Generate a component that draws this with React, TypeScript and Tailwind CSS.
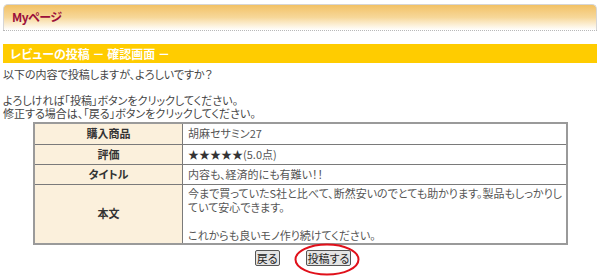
import React from 'react';

interface RowProps {
  label: string;
  children: React.ReactNode;
  height: string;
}

const Row: React.FC<RowProps> = ({ label, children, height }) => (
  <tr className={height}>
    <th className="w-[166px] border border-[#7a7a7a] bg-[#fbf0dc] p-0 text-center align-middle font-bold text-[11px] leading-[13px] text-[#333]">
      {label}
    </th>
    <td className="border border-[#7a7a7a] p-0 pl-[5px] pr-[4px] align-middle whitespace-nowrap text-[#555]">{children}</td>
  </tr>
);

const App: React.FC = () => {
  return (
    <div className="w-[600px] h-[279px] overflow-hidden bg-white px-[3px] pt-[4px] font-['Noto_Sans_CJK_JP',sans-serif] text-[11px] leading-[13px] text-[#444] [font-feature-settings:'palt']">
      {/* Myページ header */}
      <div className="h-[26px] rounded-t-[5px] border border-b-0 border-[#d6d6d6] bg-linear-to-b from-[#f2c164] via-[#f7d89a] to-white pl-[8px] pt-[5px]">
        <span className="font-bold text-[12px] leading-[14px] text-[#9c0f3a] tracking-[-0.5px]">Myページ</span>
      </div>
      <div className="border-b border-dotted border-[#b8b8b8]" />

      {/* section title */}
      <div className="mt-[13px] flex h-[19px] items-center bg-[#ffcc00] pl-[7px] font-bold text-white text-[12px] leading-[14px]">
        レビューの投稿 － 確認画面 －
      </div>

      <div className="mt-[5px]">
        <p className="h-[13px]">以下の内容で投稿しますが、よろしいですか？</p>
        <p className="mt-[13px] h-[13px]">よろしければ「投稿」ボタンをクリックしてください。</p>
        <p className="h-[13px]">修正する場合は、「戻る」ボタンをクリックしてください。</p>
      </div>

      <table className="ml-[30px] mt-[2px] w-[535px] border-collapse border-2 border-[#9a9a9a]">
        <tbody>
          <Row label="購入商品" height="h-[21px]">胡麻セサミン27</Row>
          <Row label="評価" height="h-[20px]">
            <span className="text-[#333]">★★★★★</span>(5.0点)
          </Row>
          <Row label="タイトル" height="h-[20px]">内容も、経済的にも有難い！！</Row>
          <Row label="本文" height="h-[60px]">
            <div className="leading-[14px] py-[1px]">
              今まで買っていたS社と比べて、断然安いのでとても助かります。製品もしっかりし
              <br />
              ていて安心できます。
              <br />
              <br />
              これからも良いモノ作り続けてください。
            </div>
          </Row>
        </tbody>
      </table>

      <div className="mt-[5px] flex justify-center gap-[26px] pl-[6px]">
        <button className="h-[16px] rounded-[2px] border border-[#555] bg-[#e4e4e4] px-[1px] text-[11px] leading-[13px] text-[#222]">
          戻る
        </button>
        <div className="relative">
          <button className="h-[16px] rounded-[2px] border border-[#555] bg-[#e4e4e4] px-[1px] text-[11px] leading-[13px] text-[#222]">
            投稿する
          </button>
          <svg
            className="absolute left-[-12px] top-[-7px] pointer-events-none"
            width="66"
            height="33"
            viewBox="0 0 66 33"
          >
            <ellipse cx="33" cy="16.5" rx="31.5" ry="15" fill="none" stroke="#e0101a" strokeWidth="2" />
          </svg>
        </div>
      </div>
    </div>
  );
};

export default App;
